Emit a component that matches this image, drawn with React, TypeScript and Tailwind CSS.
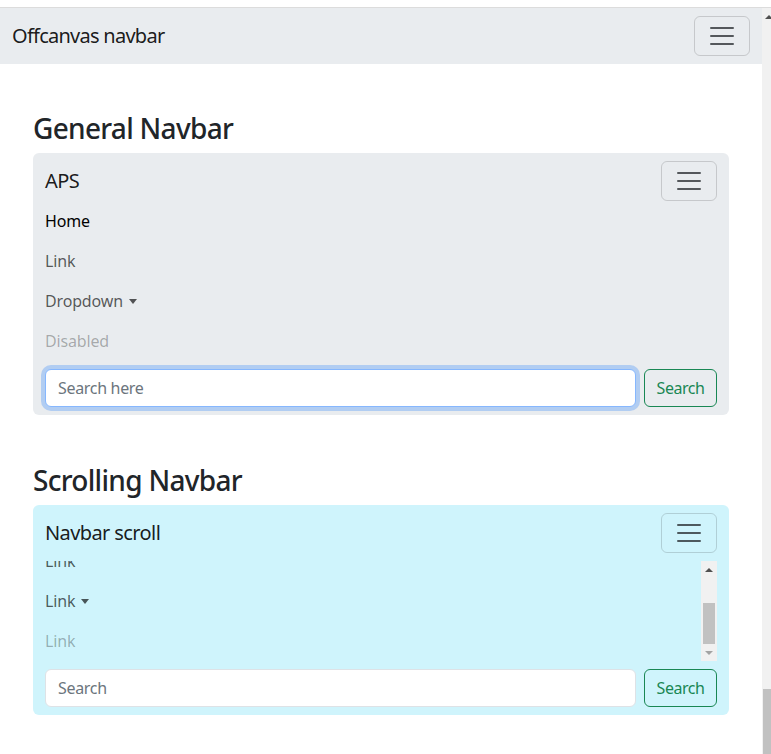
import React from "react";

const font = { fontFamily: '"Noto Sans", "Liberation Sans", sans-serif' };

function Toggler() {
  return (
    <button className="flex h-10 w-14 items-center justify-center rounded-md border border-black/15">
      <svg width="30" height="30" viewBox="0 0 30 30">
        <path
          d="M4 7h22M4 15h22M4 23h22"
          stroke="rgba(33,37,41,0.75)"
          strokeWidth="2"
          strokeLinecap="round"
        />
      </svg>
    </button>
  );
}

function Caret() {
  return <span className="ml-[6px] inline-block border-x-[4px] border-t-[5px] border-x-transparent border-t-current align-middle" />;
}

function NavLink({ label, kind = "normal", caret = false }: { label: string; kind?: "active" | "normal" | "disabled"; caret?: boolean }) {
  const color = kind === "active" ? "text-black" : kind === "disabled" ? "text-black/30" : "text-black/65";
  return (
    <li className={`flex h-10 shrink-0 items-center text-base tracking-[-0.01em] ${color}`}>
      {label}
      {caret && <Caret />}
    </li>
  );
}

function SearchForm({ placeholder, focused = false }: { placeholder: string; focused?: boolean }) {
  return (
    <form className="flex gap-2">
      <input
        placeholder={placeholder}
        className={`h-[38px] flex-1 rounded-md border bg-white px-3 text-base tracking-[-0.02em] text-[#212529] outline-none placeholder:text-[#6c757d] ${
          focused ? "border-[#86b7fe] shadow-[0_0_0_4px_rgba(13,110,253,0.25)]" : "border-[#dee2e6]"
        }`}
      />
      <button type="button" className="h-[38px] w-[73px] rounded-md border border-[#198754] text-base tracking-[-0.03em] text-[#198754]">
        Search
      </button>
    </form>
  );
}

export default function App() {
  return (
    <div className="h-[754px] overflow-hidden bg-white" style={font}>
      <div className="box-content h-[7px] border-b border-[#dcdcdc]" />
      <div className="flex h-[746px]">
        <div className="w-[762px]">
          {/* Top navbar */}
          <nav className="flex h-14 items-center justify-between bg-[#e9ecef] px-3">
            <span className="text-xl tracking-[-0.037em] text-black/90">Offcanvas navbar</span>
            <Toggler />
          </nav>

          <div className="px-[33px]">
            {/* General */}
            <h3 className="mt-12 mb-2 text-[28px] font-medium leading-[33px] tracking-[-0.025em] text-[#212529]">General Navbar</h3>
            <nav className="rounded-md bg-[#e9ecef] px-3 py-2">
              <div className="flex h-10 items-center justify-between">
                <span className="text-xl tracking-[-0.03em] text-black/90">APS</span>
                <Toggler />
              </div>
              <ul className="mb-2 flex flex-col">
                <NavLink label="Home" kind="active" />
                <NavLink label="Link" />
                <NavLink label="Dropdown" caret />
                <NavLink label="Disabled" kind="disabled" />
              </ul>
              <SearchForm placeholder="Search here" focused />
            </nav>

            {/* Scrolling */}
            <h3 className="mt-[49px] mb-2 text-[28px] font-medium leading-[33px] tracking-[-0.025em] text-[#212529]">Scrolling Navbar</h3>
            <nav className="rounded-md bg-[#cff4fc] px-3 py-2">
              <div className="flex h-10 items-center justify-between">
                <span className="text-xl tracking-[-0.03em] text-black/90">Navbar scroll</span>
                <Toggler />
              </div>
              <div className="my-2 flex h-[100px]">
                <ul className="flex flex-1 flex-col justify-end overflow-hidden">
                  <NavLink label="Home" kind="active" />
                  <NavLink label="Link" />
                  <NavLink label="Link" caret />
                  <NavLink label="Link" kind="disabled" />
                </ul>
                <div className="flex w-4 flex-col items-center bg-[#f1f1f1]">
                  <div className="flex h-[17px] items-center">
                    <span className="border-x-[4px] border-b-[4px] border-x-transparent border-b-[#505050]" />
                  </div>
                  <div className="w-full flex-1 px-[2px] pt-[25px]">
                    <div className="h-[41px] w-full bg-[#c1c1c1]" />
                  </div>
                  <div className="flex h-[17px] items-center">
                    <span className="border-x-[4px] border-t-[4px] border-x-transparent border-t-[#a3a3a3]" />
                  </div>
                </div>
              </div>
              <SearchForm placeholder="Search" />
            </nav>
          </div>
        </div>

        {/* Page scrollbar */}
        <div className="flex w-[9px] flex-col bg-[#f1f1f1]">
          <div className="flex h-[17px] items-center pl-[3px]">
            <span className="border-x-[4px] border-b-[4px] border-x-transparent border-b-[#505050]" />
          </div>
          <div className="flex flex-1 flex-col justify-end pl-[1px]">
            <div className="h-[65px] w-full bg-[#c1c1c1]" />
          </div>
        </div>
      </div>
    </div>
  );
}
